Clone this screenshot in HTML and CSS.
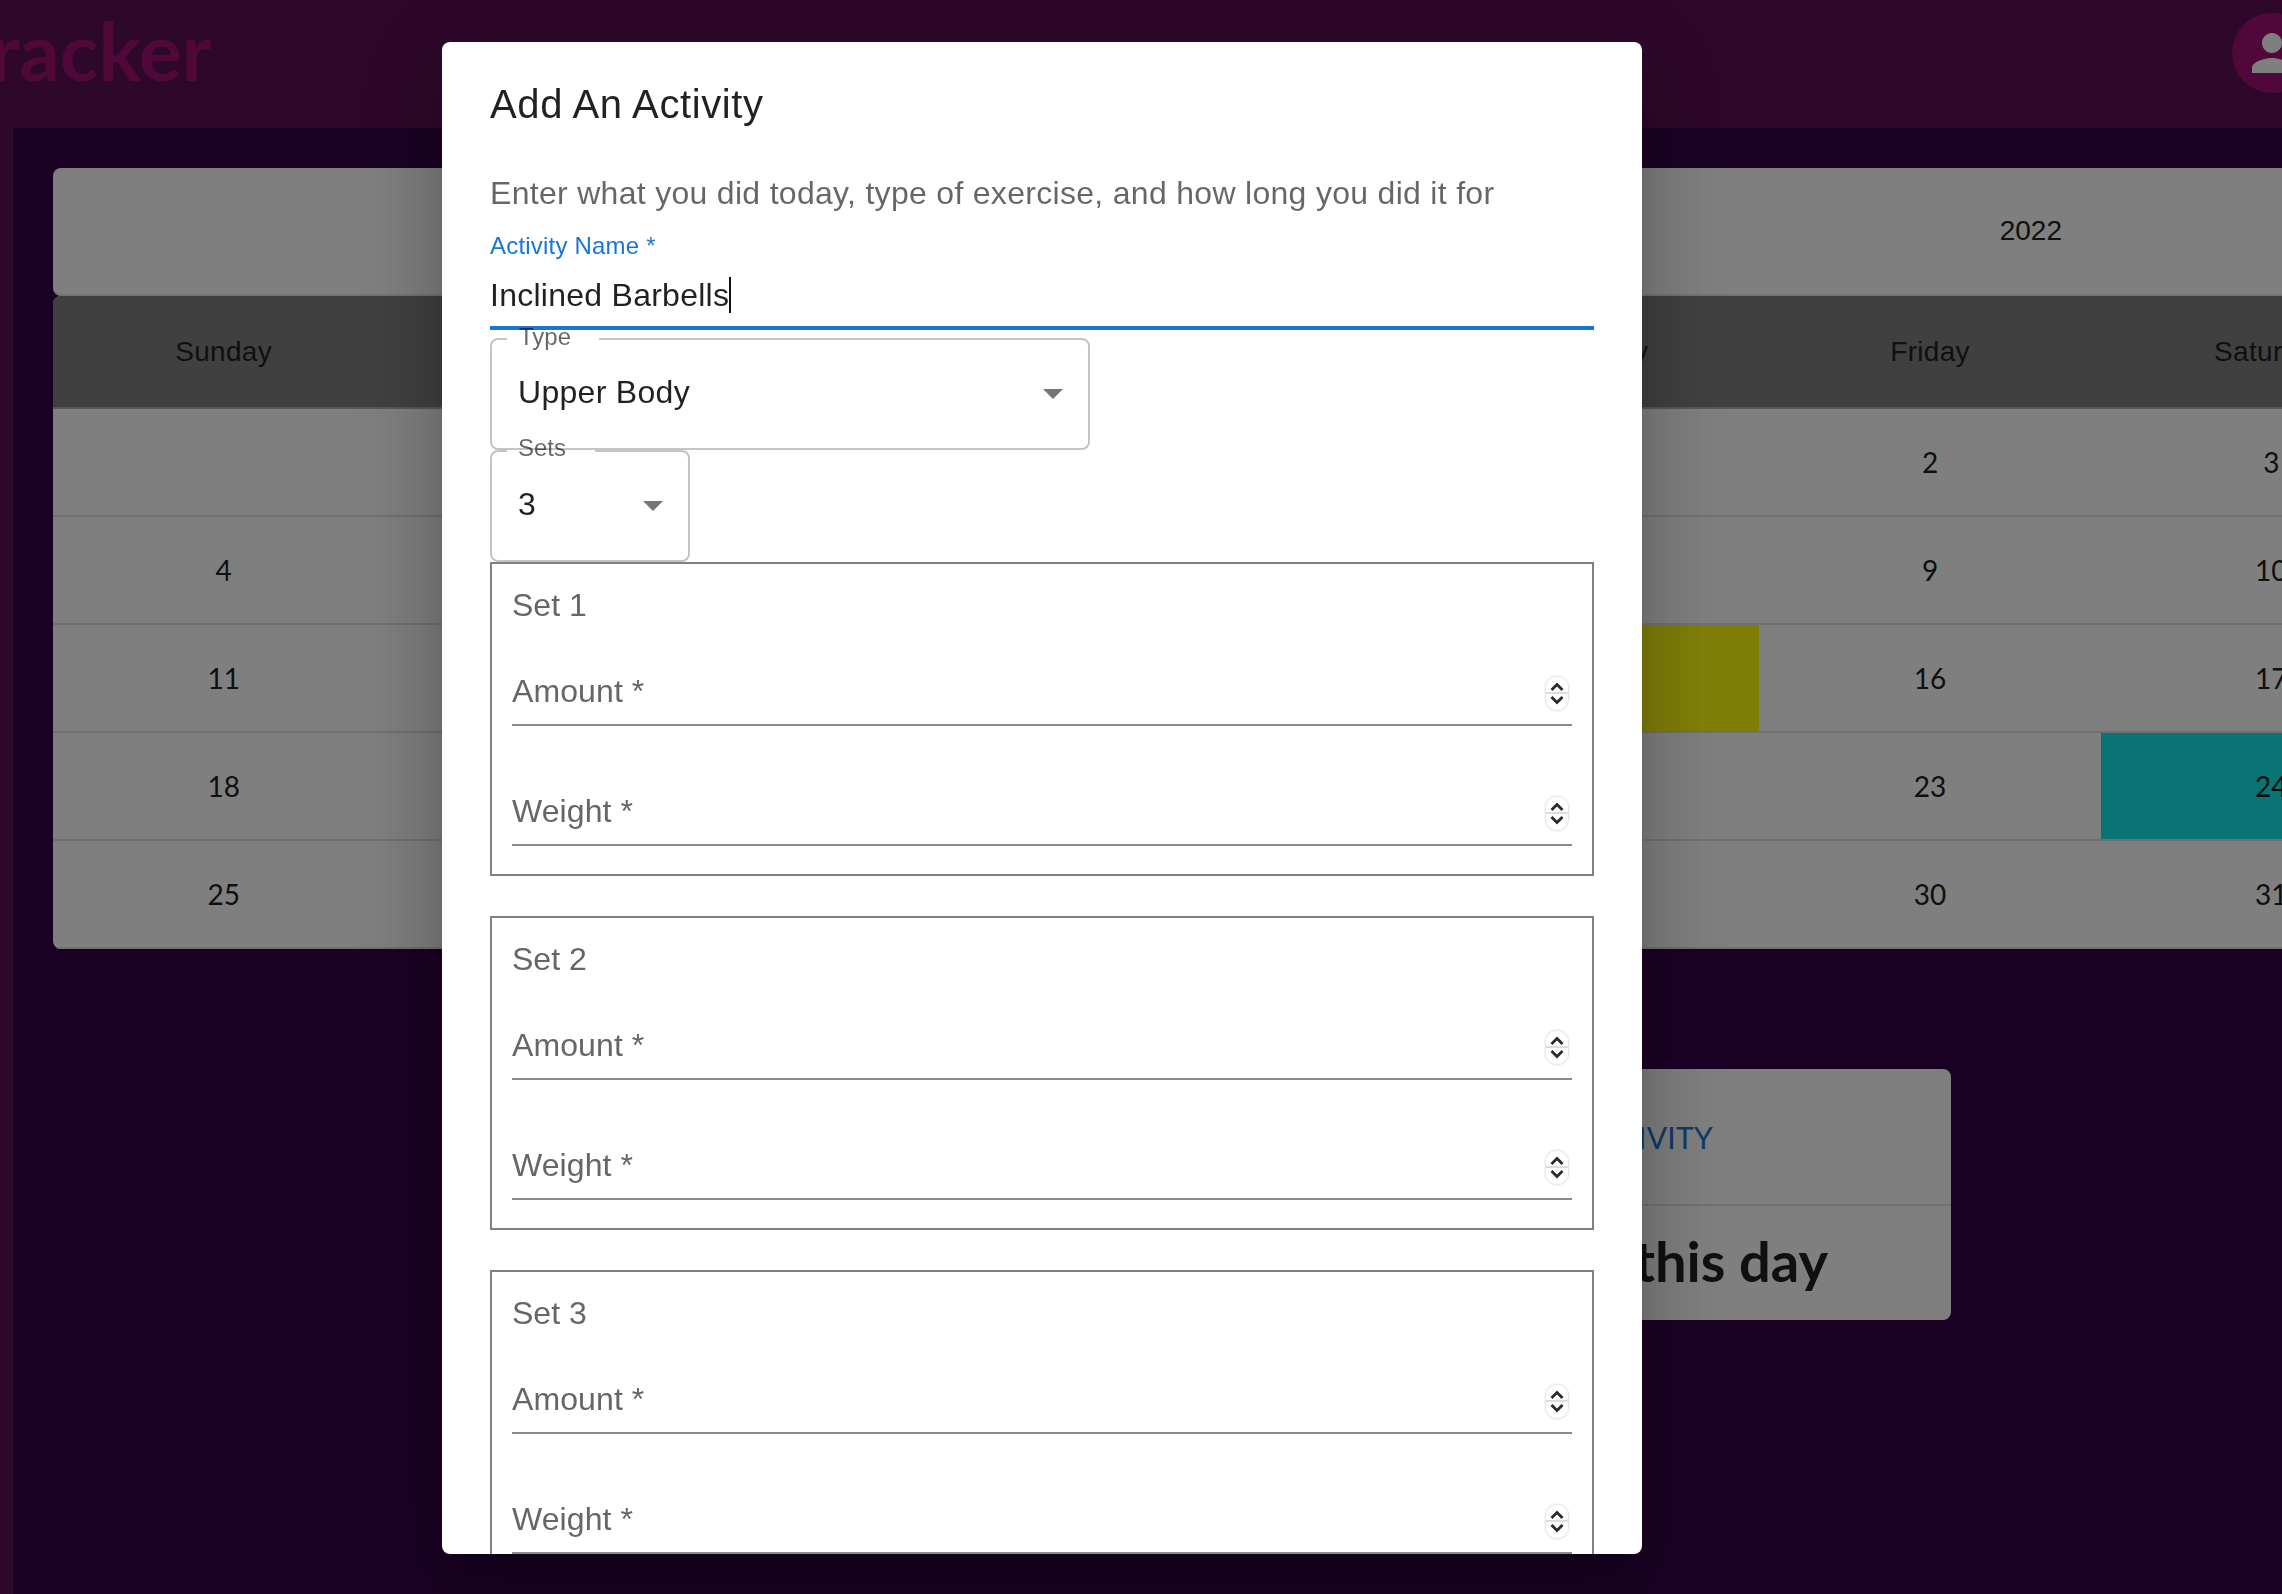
FILE: index.html
```html
<!DOCTYPE html>
<html lang="en">
<head>
<meta charset="utf-8">
<title>Tracker</title>
<link rel="stylesheet" href="styles.css">
</head>
<body>
<svg class="defs" width="0" height="0" aria-hidden="true">
  <symbol id="spin" viewBox="0 0 22 33">
    <path d="M5.5 13 11 7.5 16.5 13" fill="none" stroke="#2b2b2b" stroke-width="2.8"/>
    <path d="M5.5 20 11 25.5 16.5 20" fill="none" stroke="#2b2b2b" stroke-width="2.8"/>
  </symbol>
</svg>
<div class="page">
  <header class="topbar">
    <div class="logo">Tracker</div>
    <div class="avatar">
      <svg class="avatar-icon" viewBox="0 0 24 24"><path d="M12 12c2.21 0 4-1.79 4-4s-1.79-4-4-4-4 1.79-4 4 1.79 4 4 4zm0 2c-2.67 0-8 1.34-8 4v2h16v-2c0-2.66-5.33-4-8-4z"/></svg>
    </div>
  </header>
  <div class="body">
    <aside class="rail"></aside>
    <main class="main">
      <section class="cal">
        <div class="cal-title"><span>2022</span></div>
        <div class="cal-table">
          <div class="row head">
            <div class="cell">Sunday</div><div class="cell">Monday</div><div class="cell">Tuesday</div><div class="cell">Wednesday</div><div class="cell">Thursday</div><div class="cell">Friday</div><div class="cell">Saturday</div>
          </div>
          <div class="row week">
            <div class="cell"></div><div class="cell"></div><div class="cell"></div><div class="cell"></div><div class="cell"></div><div class="cell">2</div><div class="cell">3</div>
          </div>
          <div class="row week">
            <div class="cell">4</div><div class="cell">5</div><div class="cell">6</div><div class="cell">7</div><div class="cell">8</div><div class="cell">9</div><div class="cell">10</div>
          </div>
          <div class="row week">
            <div class="cell">11</div><div class="cell">12</div><div class="cell">13</div><div class="cell">14</div><div class="cell yellow">15</div><div class="cell">16</div><div class="cell">17</div>
          </div>
          <div class="row week">
            <div class="cell">18</div><div class="cell">19</div><div class="cell">20</div><div class="cell">21</div><div class="cell">22</div><div class="cell">23</div><div class="cell teal">24</div>
          </div>
          <div class="row week last">
            <div class="cell">25</div><div class="cell">26</div><div class="cell">27</div><div class="cell">28</div><div class="cell">29</div><div class="cell">30</div><div class="cell">31</div>
          </div>
        </div>
      </section>
      <section class="day-card">
        <div class="day-top"><span class="day-link">ADD ACTIVITY</span></div>
        <div class="day-bottom"><span class="day-msg">No activity on this day</span></div>
      </section>
    </main>
  </div>
</div>
<div class="backdrop"></div>
<div class="dialog">
  <h2 class="dialog-title">Add An Activity</h2>
  <div class="dialog-content">
    <p class="dialog-text">Enter what you did today, type of exercise, and how long you did it for</p>
    <div class="name-field">
      <div class="name-label">Activity Name *</div>
      <div class="name-input"><span>Inclined Barbells</span><span class="caret"></span></div>
    </div>
    <div class="select select-type">
      <span class="notch notch-type"></span>
      <span class="select-label">Type</span>
      <span class="select-value">Upper Body</span>
      <span class="arrow"></span>
    </div>
    <div class="select select-sets">
      <span class="notch notch-sets"></span>
      <span class="select-label sets-label">Sets</span>
      <span class="select-value">3</span>
      <span class="arrow"></span>
    </div>
    <div class="set">
      <div class="set-title">Set 1</div>
      <div class="num-field first"><span class="num-label">Amount *</span><span class="spin"><svg class="spin-icon"><use href="#spin"/></svg></span></div>
      <div class="num-field"><span class="num-label">Weight *</span><span class="spin"><svg class="spin-icon"><use href="#spin"/></svg></span></div>
    </div>
    <div class="set">
      <div class="set-title">Set 2</div>
      <div class="num-field first"><span class="num-label">Amount *</span><span class="spin"><svg class="spin-icon"><use href="#spin"/></svg></span></div>
      <div class="num-field"><span class="num-label">Weight *</span><span class="spin"><svg class="spin-icon"><use href="#spin"/></svg></span></div>
    </div>
    <div class="set">
      <div class="set-title">Set 3</div>
      <div class="num-field first"><span class="num-label">Amount *</span><span class="spin"><svg class="spin-icon"><use href="#spin"/></svg></span></div>
      <div class="num-field"><span class="num-label">Weight *</span><span class="spin"><svg class="spin-icon"><use href="#spin"/></svg></span></div>
    </div>
  </div>
</div>
</body>
</html>
```
FILE: styles.css
```css
* { box-sizing: border-box; }
html, body {
  margin: 0;
  width: 2282px;
  height: 1594px;
  overflow: hidden;
  background: #340349;
  font-family: "Liberation Sans", Arial, sans-serif;
}
.defs { position: absolute; }
.page { width: 2282px; height: 1594px; display: flex; flex-direction: column; overflow: hidden; }

.topbar {
  height: 128px;
  flex: none;
  display: flex;
  justify-content: space-between;
  align-items: flex-start;
  background: #5c1056;
}
.logo {
  margin: -4px 0 0 -50px;
  font: 700 80px/108px Lato, sans-serif;
  color: #a00e74;
}
.avatar {
  width: 80px;
  height: 80px;
  margin: 13px -30px 0 0;
  flex: none;
  border-radius: 50%;
  background: #a00e74;
  display: flex;
  align-items: center;
  justify-content: center;
}
.avatar-icon { width: 60px; height: 60px; fill: #fff; }

.body { flex: 1; display: flex; min-height: 0; }
.rail { width: 13px; flex: none; background: #5c1056; }
.main { flex: none; width: 2429px; padding: 40px 0 0 40px; }

.cal { width: 2389px; }
.cal-title {
  height: 128px;
  padding-right: 380px;
  display: flex;
  justify-content: flex-end;
  align-items: center;
  background: #fff;
  border-bottom: 2px solid #e8e8e8;
  border-radius: 8px;
  font-size: 28px;
  color: #212121;
}
.cal-table {
  border-radius: 8px;
  overflow: hidden;
  background: #fff;
}
.row { display: grid; grid-template-columns: repeat(7, 1fr); }
.cell {
  display: flex;
  align-items: center;
  justify-content: center;
  font-size: 28px;
  color: #212121;
  border-bottom: 2px solid #e0e0e0;
}
.head { background: #808080; }
.head .cell { height: 113px; letter-spacing: .3px; border-bottom-color: #b0b0b0; }
.week .cell { height: 108px; font-family: Lato, sans-serif; }
.yellow { background: #ffff10; }
.teal { background: #14e6e6; }

.day-card {
  width: 1200px;
  margin: 120px 0 0 698px;
  background: #fff;
  border-radius: 8px;
  font-family: Lato, sans-serif;
}
.day-top {
  height: 137px;
  padding-right: 238px;
  display: flex;
  justify-content: flex-end;
  align-items: center;
  border-bottom: 2px solid #e0e0e0;
}
.day-link { font-size: 30px; font-weight: 400; letter-spacing: .3px; color: #1976d2; }
.day-bottom {
  height: 114px;
  padding-right: 123px;
  display: flex;
  justify-content: flex-end;
  align-items: center;
}
.day-msg { position: relative; top: -3px; font-size: 56px; font-weight: 700; color: #212121; }

.backdrop { position: fixed; inset: 0; background: rgba(0,0,0,.5); }
.dialog {
  position: fixed;
  left: 442px;
  top: 42px;
  width: 1200px;
  height: 1512px;
  display: flex;
  flex-direction: column;
  background: #fff;
  border-radius: 8px;
  overflow: hidden;
  box-shadow: 0 22px 30px -14px rgba(0,0,0,.2), 0 48px 76px 6px rgba(0,0,0,.14), 0 18px 92px 16px rgba(0,0,0,.12);
}
.dialog-title {
  margin: 0;
  flex: none;
  padding: 30px 48px 34px;
  font-size: 40px;
  line-height: 64px;
  font-weight: 400;
  letter-spacing: .6px;
  color: rgba(0,0,0,.87);
}
.dialog-content { flex: 1; min-height: 0; padding: 0 48px; overflow: hidden; }
.dialog-text {
  margin: 0 0 2px;
  font-size: 32px;
  line-height: 46px;
  letter-spacing: .3px;
  color: rgba(0,0,0,.6);
}

.name-field { height: 112px; padding-top: 12px; }
.name-label { font-size: 24px; line-height: 32px; letter-spacing: .2px; color: #1976d2; }
.name-input {
  display: flex;
  align-items: center;
  height: 68px;
  padding: 10px 0 8px;
  border-bottom: 4px solid #1976d2;
  font-size: 32px;
  line-height: 46px;
  letter-spacing: .26px;
  color: rgba(0,0,0,.87);
}
.caret { width: 2px; height: 36px; background: #111; }

.select {
  position: relative;
  height: 112px;
  display: flex;
  align-items: center;
  justify-content: space-between;
  padding: 0 25px 0 26px;
  border: 2px solid #c4c4c4;
  border-radius: 8px;
  font-size: 32px;
  letter-spacing: .3px;
  color: rgba(0,0,0,.87);
}
.select-type { width: 600px; margin-top: 8px; }
.select-sets { width: 200px; }
.select-label {
  position: absolute;
  left: 27px;
  top: -15px;
  font-size: 24px;
  line-height: 24px;
  letter-spacing: 0;
  color: rgba(0,0,0,.6);
}
.sets-label { top: -16px; left: 26px; }
.notch { position: absolute; left: 15px; top: -2px; height: 2px; background: #fff; }
.notch-type { width: 92px; }
.notch-sets { width: 88px; }
.select-value { position: relative; top: -2px; }
.arrow {
  width: 0;
  height: 0;
  border-left: 10px solid transparent;
  border-right: 10px solid transparent;
  border-top: 10px solid #757575;
}

.set {
  height: 314px;
  margin-bottom: 40px;
  padding: 17px 20px 0;
  border: 2px solid #808080;
}
.set-title { font-size: 32px; line-height: 48px; color: #666; }
.num-field {
  display: flex;
  justify-content: space-between;
  align-items: flex-end;
  height: 58px;
  margin-top: 62px;
  padding-bottom: 10px;
  border-bottom: 2px solid #8c8c8c;
}
.num-field.first { margin-top: 39px; }
.num-label { font-size: 32px; line-height: 46px; letter-spacing: .1px; color: #666; }
.spin {
  position: relative;
  top: -4px;
  width: 22px;
  height: 33px;
  margin-right: 4px;
  border-radius: 11px;
  background: linear-gradient(#fff 0 15px, #ddd 15px 17px, #fff 17px);
  box-shadow: 0 0 3px rgba(0,0,0,.28);
}
.spin-icon { display: block; width: 22px; height: 33px; }
```
